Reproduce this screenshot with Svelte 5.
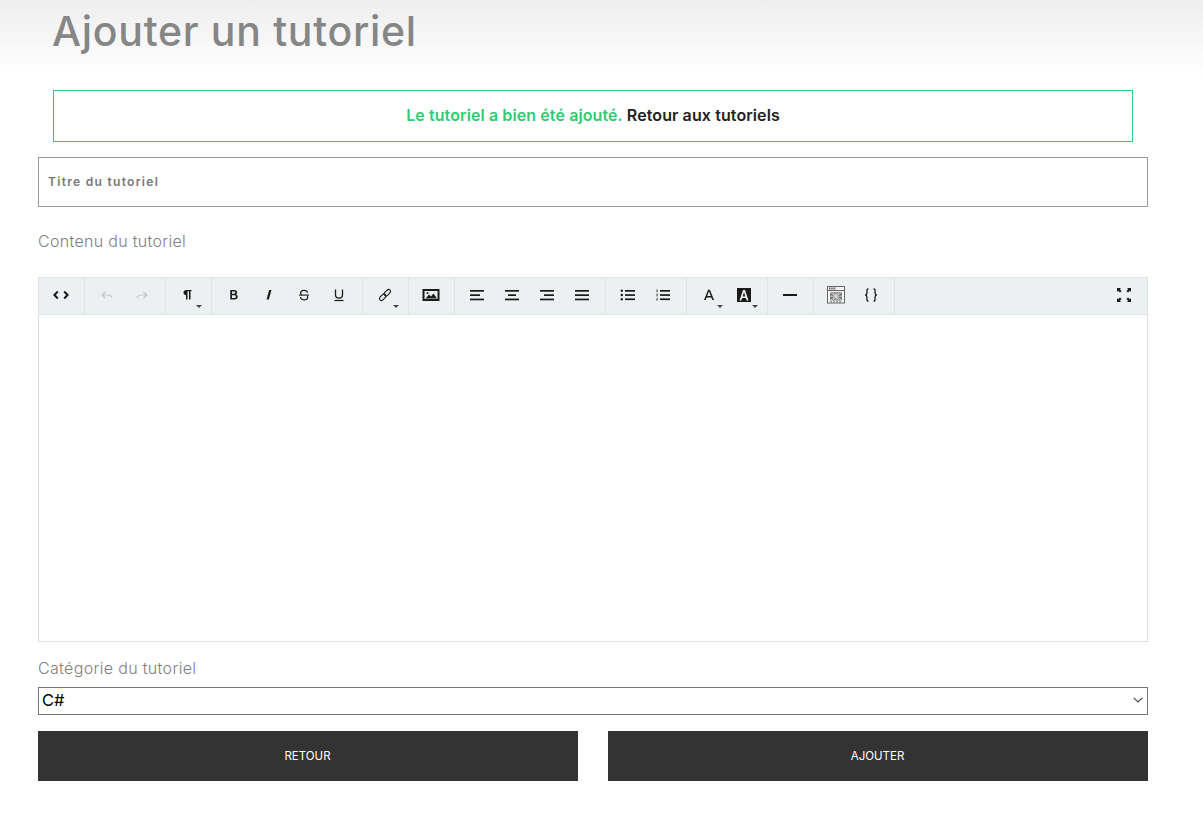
<script>
  const groups = [
    [{ i: 'code' }],
    [{ i: 'undo', off: true }, { i: 'redo', off: true }],
    [{ i: 'para', caret: true }],
    [{ i: 'bold' }, { i: 'italic' }, { i: 'strike' }, { i: 'under' }],
    [{ i: 'link', caret: true }],
    [{ i: 'image' }],
    [{ i: 'left' }, { i: 'center' }, { i: 'right' }, { i: 'justify' }],
    [{ i: 'ul' }, { i: 'ol' }],
    [{ i: 'color', caret: true }, { i: 'bg', caret: true }],
    [{ i: 'hr' }],
    [{ i: 'table' }, { i: 'braces' }]
  ];
  const aligns = {
    left: [[0, 14], [0, 10], [0, 14]],
    center: [[0, 14], [3, 11], [0, 14]],
    right: [[0, 14], [4, 14], [0, 14]],
    justify: [[0, 14], [0, 14], [0, 14]]
  };
</script>

{#snippet icon(name)}
  <svg class="ico" width="20" height="20" viewBox="0 0 20 20" aria-hidden="true">
    {#if name === 'code'}
      <path d="M6.800 6.500 3.400 10l3.400 3.500M13.200 6.500l3.400 3.500-3.400 3.500" class="line" stroke-width="2" />
    {:else if name === 'undo'}
      <path d="M8.500 6.800 5 10l3.500 3M5.500 10h5.500c2 0 3.500 1 4 3.200" class="line" stroke-width="1.200" />
    {:else if name === 'redo'}
      <path d="M11.500 6.800 15 10l-3.500 3M14.500 10H9c-2 0-3.500 1-4 3.200" class="line" stroke-width="1.200" />
    {:else if name === 'para'}
      <path d="M8 14.500V10.200C6.200 10 5.500 8.600 5.500 7.500c0-1.500 1-2.500 3-2.500h5v1.300h-1v8.200h-1.500V6.300H9.500v8.200Z" class="solid" />
    {:else if name === 'bold'}
      <path d="M6.300 5h4c1.800 0 2.900 1 2.900 2.400 0 1-.6 1.700-1.400 2 1.200.3 1.900 1.200 1.900 2.400 0 1.700-1.200 2.800-3.200 2.800H6.300ZM8 6.500v2.300h2c.9 0 1.400-.5 1.400-1.200S10.900 6.500 10 6.500Zm0 3.700v2.900h2.300c1 0 1.600-.6 1.600-1.400s-.6-1.500-1.600-1.500Z" class="solid" />
    {:else if name === 'italic'}
      <path d="M10.200 5h2.300L9.800 14.600H7.500Z" class="solid" />
    {:else if name === 'strike'}
      <path d="M13.600 7.700C13.300 6.100 11.900 5.300 10 5.300 8 5.300 6.600 6.200 6.600 7.800c0 .9.500 1.600 1.300 2M6.400 12c.3 1.800 1.700 2.800 3.600 2.800 2.200 0 3.600-1 3.600-2.600 0-.5-.1-1-.4-1.300" class="line" stroke-width="1.200" />
      <path d="M5 10.100h10" class="line" stroke-width="1.100" />
    {:else if name === 'under'}
      <path d="M6.500 4.500v5.600c0 2 1.300 3 3.500 3s3.500-1 3.500-3V4.500" class="line" stroke-width="1.300" />
      <path d="M5.500 15.500h9" class="line" stroke-width="1.200" />
    {:else if name === 'link'}
      <g transform="rotate(-45 10 10)" class="line" stroke-width="1.100">
        <rect x="3" y="8" width="7.600" height="4" rx="2" />
        <rect x="9.400" y="8" width="7.600" height="4" rx="2" />
      </g>
    {:else if name === 'image'}
      <path d="M1.500 4h17v12h-17Zm2 2v8h13V6Z" class="solid" fill-rule="evenodd" />
      <path d="M4.500 13.500 8 9.500l2 2 2.500-3 3.500 5Z" class="solid" />
      <circle cx="6.500" cy="8" r="1" class="solid" />
    {:else if aligns[name]}
      {#each aligns[name] as r, n}
        <rect x={3 + r[0]} y={5 + n * 4.300} width={r[1] - r[0]} height="1.700" class="solid" />
      {/each}
    {:else if name === 'ul'}
      {#each [0, 1, 2] as n}
        <circle cx="3.800" cy={5.800 + n * 4.200} r="1.200" class="solid" />
        <rect x="7" y={5 + n * 4.200} width="10" height="1.700" class="solid" />
      {/each}
    {:else if name === 'ol'}
      {#each [0, 1, 2] as n}
        <rect x="3.500" y={4.500 + n * 4.200} width="1.200" height="2.700" class="dim" />
        <rect x="7" y={5 + n * 4.200} width="10" height="1.700" class="solid" />
      {/each}
    {:else if name === 'color'}
      <path d="M5 15 9.100 4.800h1.800L15 15h-1.700l-1-2.600H7.700l-1 2.600Zm3.200-4h3.600L10 6.300Z" class="solid" fill-rule="evenodd" />
    {:else if name === 'bg'}
      <path d="M3 3h14v14H3ZM5.500 15.500h1.800l.9-2.500h3.600l.9 2.500h1.800L11 5H9Zm3.200-4L10 7.200l1.300 4.300Z" class="solid" fill-rule="evenodd" />
    {:else if name === 'hr'}
      <rect x="3" y="9" width="14" height="2" class="solid" />
    {:else if name === 'table'}
      <rect x="1.500" y="1.500" width="17" height="16.500" class="box" />
      <path d="M1.500 5.500h17" class="hatch" stroke-width="1" />
      <path d="M3 3.500h7" class="hatch" stroke-width="2" stroke-dasharray="1.500 .7" />
      <rect x="4" y="7" width="12" height="8.500" class="fillgrey" />
      <path d="M4 7l12 8.500M16 7 4 15.500M10 7v8.500M4 11.200h12M7 7l6 8.500M13 7l-6 8.500" class="hatch light" stroke-width=".8" />
      <path d="M4 16.800h12" class="hatch" stroke-width=".8" stroke-dasharray="2 1" />
    {:else if name === 'braces'}
      <path d="M7.500 3.800C5.500 3.800 6 5.500 6 7.500c0 1.500-.5 2.300-1.700 2.500C5.500 10.200 6 11 6 12.500c0 2-.5 3.700 1.500 3.700M12.500 3.800c2 0 1.500 1.700 1.500 3.700 0 1.500.5 2.300 1.700 2.500-1.200.2-1.700 1-1.700 2.500 0 2 .5 3.700-1.500 3.700" class="line" stroke-width="1.300" />
    {:else if name === 'full'}
      <path d="M3 3h4L5.800 4.200 7.600 6 6 7.600 4.200 5.800 3 7ZM17 3v4l-1.200-1.200L14 7.600 12.400 6l1.800-1.800L13 3ZM3 17v-4l1.200 1.200L6 12.400 7.600 14l-1.800 1.800L7 17ZM17 17h-4l1.200-1.200-1.800-1.800 1.600-1.600 1.800 1.800L17 13Z" class="solid" />
    {/if}
  </svg>
{/snippet}

<div class="page">
  <header class="top"><h1>Ajouter un tutoriel</h1></header>

  <p class="alert"><span class="ok">Le tutoriel a bien été ajouté.</span> <a href="#retour">Retour aux tutoriels</a></p>

  <form class="form">
    <input class="title" type="text" placeholder="Titre du tutoriel" />

    <div class="label content-label">Contenu du tutoriel</div>

    <div class="editor">
      <div class="toolbar">
        {#each groups as g}
          <div class="group">
            {#each g as b}
              <button type="button" class="tb" class:off={b.off}>
                {@render icon(b.i)}
                {#if b.caret}<span class="caret"></span>{/if}
              </button>
            {/each}
          </div>
        {/each}
        <button type="button" class="tb full">{@render icon('full')}</button>
      </div>
      <div class="area"></div>
    </div>

    <div class="label cat-label">Catégorie du tutoriel</div>
    <div class="select">
      <span>C#</span>
      <svg width="10" height="6" viewBox="0 0 10 6" aria-hidden="true"><path d="M.7.8 5 5 9.300.8" fill="none" stroke="#444" stroke-width="1.100" /></svg>
    </div>

    <div class="actions">
      <button type="button" class="btn">RETOUR</button>
      <button type="button" class="btn">AJOUTER</button>
    </div>
  </form>
</div>

<style>
  :global(body) {
    margin: 0;
    background: #fff;
    font-family: Inter, "Liberation Sans", sans-serif;
  }
  .page {
    height: 823px;
    box-sizing: border-box;
    overflow: hidden;
  }
  .top {
    height: 75px;
    padding: 0 52px;
    box-sizing: border-box;
    background: linear-gradient(#eeeeee, #ffffff);
  }
  h1 {
    margin: 0;
    padding-top: 7px;
    font-size: 41px;
    line-height: 48px;
    font-weight: 500;
    color: #868686;
    letter-spacing: 0.7px;
  }
  .alert {
    margin: 15px 70px 0 53px;
    height: 52px;
    box-sizing: border-box;
    border: 1px solid #2ecc71;
    padding-bottom: 3px;
    display: flex;
    justify-content: center;
    align-items: center;
    gap: 4px;
    font-size: 16px;
    letter-spacing: 0.1px;
    font-weight: 600;
  }
  .ok { color: #2ecc71; }
  .alert a { color: #222; text-decoration: none; }
  .form {
    margin: 15px 55px 0 38px;
  }
  .title {
    display: block;
    width: 100%;
    height: 50px;
    box-sizing: border-box;
    border: 1px solid #999;
    border-radius: 0;
    padding: 0 9px 2px;
    outline: none;
    font-family: inherit;
    font-size: 12px;
    font-weight: 600;
    letter-spacing: 1.3px;
  }
  .title::placeholder { color: #777; opacity: 1; }
  .label {
    font-size: 16px;
    font-weight: 300;
    color: #7f7f7f;
    line-height: 20px;
  }
  .content-label { margin-top: 24px; letter-spacing: 0.3px; }
  .editor {
    margin-top: 26px;
    height: 365px;
    box-sizing: border-box;
    border: 1px solid #ddd;
    border-top: 0;
    display: flex;
    flex-direction: column;
  }
  .toolbar {
    height: 38px;
    box-sizing: border-box;
    margin: 0 -1px;
    border: 1px solid #dee3e4;
    background: #ecf0f1;
    display: flex;
    align-items: stretch;
  }
  .group {
    display: flex;
    padding: 0 5px;
    border-right: 1px solid #dee3e4;
  }
  .tb {
    position: relative;
    width: 35px;
    padding: 0 2px 2px 0;
    border: 0;
    background: none;
    display: flex;
    align-items: center;
    justify-content: center;
    color: #1a1a1a;
  }
  .ico {
    display: block;
    width: 20px;
    height: 20px;
    flex: none;
  }
  .line { fill: none; stroke: currentColor; }
  .solid { fill: currentColor; }
  .dim { fill: #555; }
  .box { fill: #f4f4f4; stroke: #666; stroke-width: 1; }
  .fillgrey { fill: #777; }
  .hatch { fill: none; stroke: #666; }
  .light { stroke: #e4e4e4; }
  .off { color: #c3c8cb; }
  .caret {
    position: absolute;
    right: 4px;
    bottom: 6px;
    width: 0;
    height: 0;
    border: 3px solid transparent;
    border-top-color: #444;
    border-bottom: 0;
  }
  .full { margin-left: auto; margin-right: 5px; }
  .area { flex: 1; }
  .cat-label { margin-top: 16px; letter-spacing: 0.33px; }
  .select {
    margin-top: 9px;
    height: 28px;
    box-sizing: border-box;
    border: 1px solid #777;
    padding: 0 4px 2px 3px;
    display: flex;
    align-items: center;
    justify-content: space-between;
    font-size: 16.500px;
    color: #000;
  }
  .actions {
    margin-top: 16px;
    display: grid;
    grid-template-columns: 1fr 1fr;
    gap: 30px;
  }
  .btn {
    height: 50px;
    border: 0;
    background: #333;
    color: #fff;
    font-family: inherit;
    font-size: 11.500px;
    font-weight: 400;
    padding: 0 1px 0 0;
  }
</style>
